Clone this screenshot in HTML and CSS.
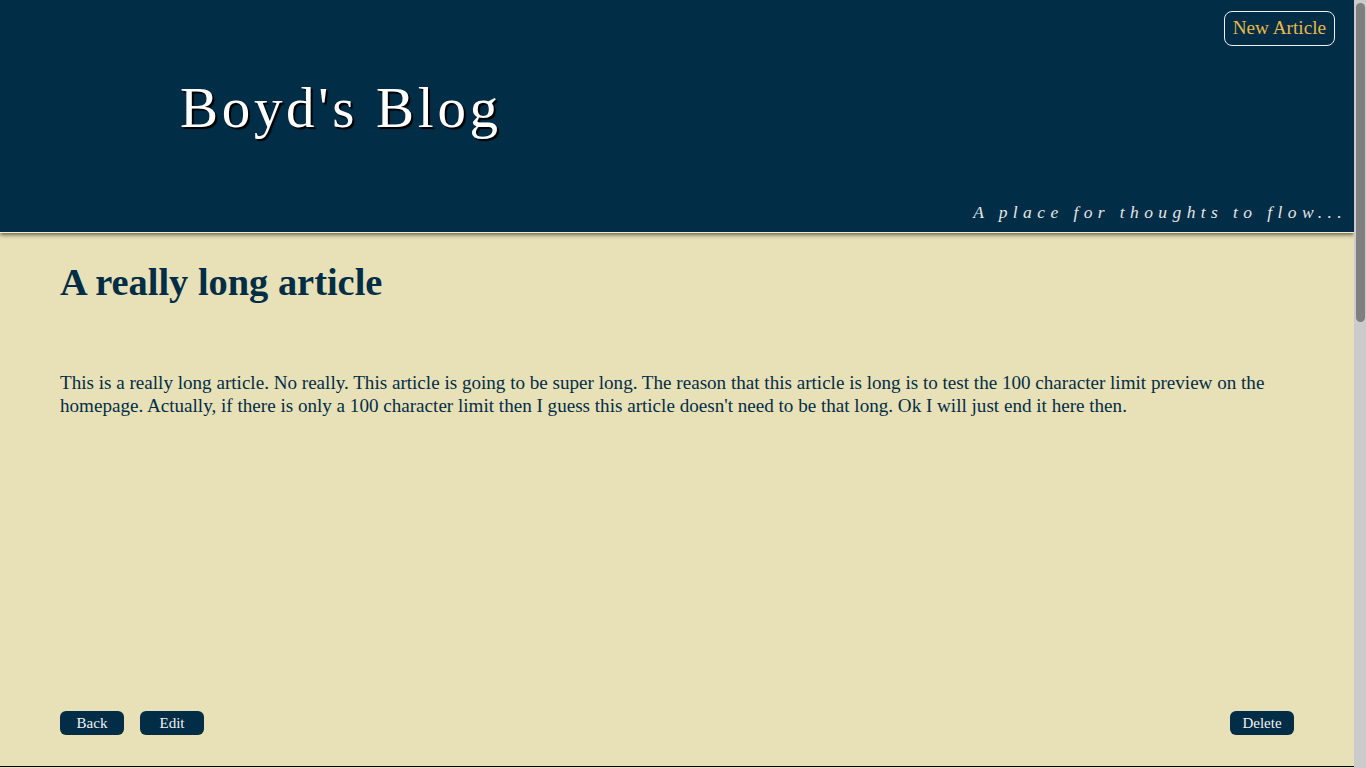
FILE: index.html
```html
<!DOCTYPE html>
<html lang="en">
<head>
<meta charset="utf-8">
<title>Boyd's Blog</title>
<link rel="stylesheet" href="styles.css">
</head>
<body>
<header class="site-header">
  <div class="header-top">
    <a class="new-article" href="#">New Article</a>
  </div>
  <h1 class="site-title">Boyd's Blog</h1>
  <p class="tagline">A place for thoughts to flow...</p>
</header>
<main class="article">
  <h2 class="article-title">A really long article</h2>
  <p class="article-body">This is a really long article. No really. This article is going to be super long. The reason that this article is long is to test the 100 character limit preview on the homepage. Actually, if there is only a 100 character limit then I guess this article doesn't need to be that long. Ok I will just end it here then.</p>
  <div class="actions">
    <div class="actions-left">
      <button class="btn">Back</button>
      <button class="btn">Edit</button>
    </div>
    <button class="btn">Delete</button>
  </div>
</main>
<footer class="site-footer"></footer>
<div class="scrollbar" aria-hidden="true"><div class="scrollbar-thumb"></div></div>
</body>
</html>
```
FILE: styles.css
```css
html {
  background: #e8e0b6;
}
body {
  margin: 0 12px 0 0;
  background: #e8e0b6;
  font-family: "Liberation Serif", "Times New Roman", serif;
  color: #012d47;
}
.site-header {
  height: 233px;
  box-sizing: border-box;
  background: #012d47;
  border-bottom: 1px solid #f4efc9;
  box-shadow: 0 2px 4px rgba(0, 0, 0, 0.55);
  display: flex;
  flex-direction: column;
  padding: 11px 19px 0 0;
  position: relative;
}
.header-top {
  display: flex;
  justify-content: flex-end;
}
.new-article {
  display: inline-block;
  color: #e9b949;
  text-decoration: none;
  font-size: 19.2px;
  line-height: 22px;
  padding: 5px 8px 6px 8px;
  border: 1px solid #f0f0f0;
  border-radius: 8px;
}
.site-title {
  margin: 29px 0 0 180px;
  font-size: 57px;
  font-weight: normal;
  line-height: 66px;
  letter-spacing: 3.7px;
  color: #ffffff;
  text-shadow: 2px 2px 1px #000;
}
.tagline {
  margin: auto -12px 9px 0;
  text-align: right;
  font-style: italic;
  font-size: 17.5px;
  letter-spacing: 5.4px;
  color: #e6e6e6;
}
.article {
  padding: 27px 60px 0;
  display: flex;
  flex-direction: column;
  min-height: 534px;
  box-sizing: border-box;
  border-bottom: 1px solid #000;
}
.article-title {
  margin: 0;
  font-size: 38.4px;
  line-height: 44px;
  font-weight: bold;
}
.article-body {
  margin: 67px 0 0;
  font-size: 19.1px;
  line-height: 23px;
}
.actions {
  margin-top: auto;
  margin-bottom: 31px;
  display: flex;
  justify-content: space-between;
}
.actions-left {
  display: flex;
  gap: 16px;
}
.btn {
  width: 64px;
  height: 24px;
  padding: 0;
  border: none;
  border-radius: 6px;
  background: #012d47;
  color: #f2f2f2;
  font-family: "Liberation Serif", "Times New Roman", serif;
  font-size: 15px;
}
.site-footer {
  height: 1075px;
}
.scrollbar {
  position: fixed;
  top: 0;
  right: 0;
  width: 12px;
  height: 100vh;
  background: #cbcbcb;
}
.scrollbar-thumb {
  margin: 3px 1px 0 2px;
  height: 319px;
  border-radius: 5px;
  background: #7f7f7f;
}
```
